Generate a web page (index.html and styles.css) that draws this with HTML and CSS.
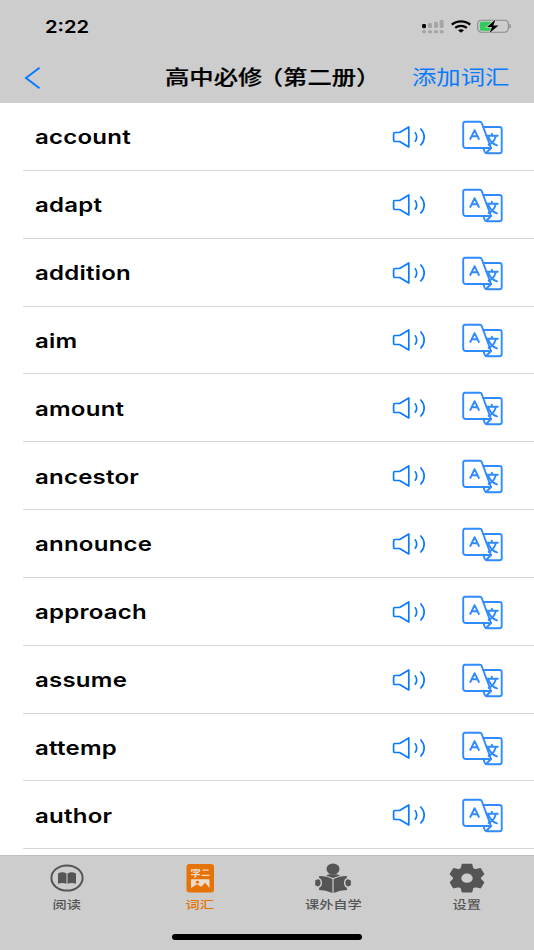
FILE: index.html
```html
<!DOCTYPE html>
<html lang="zh">
<head>
    <meta charset="utf-8" />
    <title>高中必修（第二册）</title>
    <link rel="stylesheet" href="styles.css">
</head>
<body class="body">
    <!-- icons used in every row -->
    <svg class="sprite">
        <symbol id="sound" viewBox="0 0 36 26">
            <path d="M3.8 8.5H8.6L17.8 3V23L8.6 17.5H3.8Q2.6 17.5 2.6 16.3V9.7Q2.6 8.5 3.8 8.5Z" />
            <path d="M24.2 8.8C26.2 11 26.2 15 24.2 17.2M29.8 5C34.3 9.6 34.3 16.4 29.8 21" />
        </symbol>
        <symbol id="translate" viewBox="0 0 44 36">
            <path d="M5.2 2.7H20Q21.2 2.7 21.7 4L31 29H6Q3.2 29 3.2 26.5V4.7Q3.2 2.7 5.2 2.7Z" />
            <path d="M23.5 8H39.5Q41.7 8 41.7 10.2V32.2Q41.7 34.3 39.5 34.3H27Q25.3 34.3 24.8 33L23.5 29.2M31 29L26.2 34" />
            <path d="M10.3 20L14.6 11.2L18.9 20M12.2 17.3H17" />
            <path d="M26.5 16.8H37.8M31.8 14.8V16.8M35.8 17C34.8 21 32 24.6 28.6 26M28.6 18.5C30.2 22 33.5 25.3 37 26.4" />
        </symbol>
    </svg>

    <div class="header">
        <div class="statusBar">
            <span class="time">2:22</span>
            <div class="statusIcons">
                <svg class="signal" width="22" height="15" viewBox="0 0 22 15">
                    <g fill="#a5a5a5">
                        <rect x="6" y="4" width="4" height="5" rx="1.2" />
                        <rect x="12" y="2.7" width="4" height="6.3" rx="1.2" />
                        <rect x="17.6" y="1" width="4" height="8" rx="1.2" />
                        <rect x="0" y="11.3" width="4" height="3" rx="1.2" />
                        <rect x="6" y="11.3" width="4" height="3" rx="1.2" />
                        <rect x="12" y="11.3" width="4" height="3" rx="1.2" />
                        <rect x="17.6" y="11.3" width="4" height="3" rx="1.2" />
                    </g>
                    <rect x="0" y="5" width="4" height="4.2" rx="1.4" />
                </svg>
                <svg class="wifi" width="20" height="13" viewBox="0 0 20 13">
                    <g fill="none" stroke="#000" stroke-width="2.3">
                        <path d="M.8 4.6C5.8 .3 14.2 .3 19.2 4.6" />
                        <path d="M4.2 7.8C7.5 5.1 12.5 5.1 15.8 7.8" />
                    </g>
                    <path d="M7 10.2Q10 8.2 13 10.2L10 12.8Z" />
                </svg>
                <svg class="battery" width="35" height="15" viewBox="0 0 35 15">
                    <rect x=".7" y="1.2" width="30.6" height="12" rx="3.6" fill="none" stroke="#8a8a8a" stroke-width="1.1" />
                    <path d="M32.8 5.2Q34.6 7.2 32.8 9.2Z" fill="#8a8a8a" stroke="#8a8a8a" stroke-width=".7" />
                    <rect x="2.8" y="2.8" width="12" height="9" rx="1.8" fill="#30cb5a" />
                    <path d="M18.5 .5L10 8H15L12.5 14L21.5 6.4H16.3Z" stroke="#cdcdcd" stroke-width="1.6" paint-order="stroke" />
                </svg>
            </div>
        </div>
        <div class="navBar">
            <svg class="back" width="18" height="24" viewBox="0 0 18 24">
                <path d="M15.5 1.8L2 12L15.5 22.2" />
            </svg>
            <span class="title">高中必<span class="tight">修</span>（第二册）</span>
            <span class="add">添加词汇</span>
        </div>
    </div>

    <ul class="list">
        <li class="row"><span class="word">account</span><svg class="sound"><use href="#sound" /></svg><svg class="translate"><use href="#translate" /></svg></li>
        <li class="row"><span class="word">adapt</span><svg class="sound"><use href="#sound" /></svg><svg class="translate"><use href="#translate" /></svg></li>
        <li class="row"><span class="word">addition</span><svg class="sound"><use href="#sound" /></svg><svg class="translate"><use href="#translate" /></svg></li>
        <li class="row"><span class="word">aim</span><svg class="sound"><use href="#sound" /></svg><svg class="translate"><use href="#translate" /></svg></li>
        <li class="row"><span class="word">amount</span><svg class="sound"><use href="#sound" /></svg><svg class="translate"><use href="#translate" /></svg></li>
        <li class="row"><span class="word">ancestor</span><svg class="sound"><use href="#sound" /></svg><svg class="translate"><use href="#translate" /></svg></li>
        <li class="row"><span class="word">announce</span><svg class="sound"><use href="#sound" /></svg><svg class="translate"><use href="#translate" /></svg></li>
        <li class="row"><span class="word">approach</span><svg class="sound"><use href="#sound" /></svg><svg class="translate"><use href="#translate" /></svg></li>
        <li class="row"><span class="word">assume</span><svg class="sound"><use href="#sound" /></svg><svg class="translate"><use href="#translate" /></svg></li>
        <li class="row"><span class="word">attemp</span><svg class="sound"><use href="#sound" /></svg><svg class="translate"><use href="#translate" /></svg></li>
        <li class="row"><span class="word">author</span><svg class="sound"><use href="#sound" /></svg><svg class="translate"><use href="#translate" /></svg></li>
    </ul>

    <div class="tabBar">
        <div class="tabs">
            <div class="tab">
                <svg width="36" height="32" viewBox="0 0 36 32">
                    <ellipse cx="18" cy="16" rx="15.6" ry="12.6" fill="none" stroke="#555" stroke-width="2" />
                    <path d="M9 11.5Q13.3 9 17.5 11.5V21.8Q13.3 20 9 21.8ZM18.5 11.5Q22.7 9 27 11.5V21.8Q22.7 20 18.5 21.8Z" fill="#555" />
                </svg>
                <span class="label">阅读</span>
            </div>
            <div class="tab active">
                <svg width="36" height="32" viewBox="0 0 36 32">
                    <rect x="4.5" y="2" width="27.5" height="28.5" rx="3" fill="#e67307" />
                    <g fill="none" stroke="#ecdccb" stroke-width="1.3">
                        <path d="M9.5 9.7V8H17.5V9.7M13.5 6.7V8M10.8 10.2H16L13.6 11.8V14.8H12M9 12.6H18" />
                        <path d="M20.5 8.2H26.5M19.5 13.4H27.5" />
                    </g>
                    <path d="M10 17.3H26.5Q27.5 17.3 27.5 18.3V26L23.2 20.8L19.2 24.8L15 22.3L9 26V18.3Q9 17.3 10 17.3Z" fill="#ecdccb" />
                    <ellipse cx="15.4" cy="20.2" rx="1.7" ry="1.4" fill="#e67307" />
                </svg>
                <span class="label">词汇</span>
            </div>
            <div class="tab">
                <svg width="38" height="32" viewBox="0 0 38 32">
                    <g fill="#555">
                        <ellipse cx="19" cy="7" rx="6.5" ry="5.6" />
                        <path d="M4.8 14.2Q12 13.6 18.4 17V31Q12 28 4.8 28L5.4 25.6Q8 24.6 8 20.8Q8 17 5.4 16.2ZM33.2 14.2Q26 13.6 19.6 17V31Q26 28 33.2 28L32.6 25.6Q30 24.6 30 20.8Q30 17 32.6 16.2Z" />
                        <path d="M12 13.4Q14.5 12.2 16 12.2H22Q23.5 12.2 26 13.4L19 16Z" />
                        <path d="M3.8 17.2Q6.6 17.4 6.6 20.8Q6.6 24.2 3.8 24.4L1.2 23.2V18.4ZM34.2 17.2Q31.4 17.4 31.4 20.8Q31.4 24.2 34.2 24.4L36.8 23.2V18.4Z" />
                    </g>
                </svg>
                <span class="label">课外自学</span>
            </div>
            <div class="tab">
                <svg class="gear" width="36" height="32" viewBox="0 0 36 32">
                    <path fill="#555" stroke="#555" stroke-width="2" stroke-linejoin="round" fill-rule="evenodd" d="M13.6 2.8H22.4L23.4 6.8L26.4 8.1L31.2 7L34.2 12L31 15.2V17.2L34.2 20.4L31.2 25.4L26.4 24.2L23.4 25.6L22.4 29.6H13.6L12.6 25.6L9.6 24.2L4.8 25.4L1.8 20.4L5 17.2V15.2L1.8 12L4.8 7L9.6 8.1L12.6 6.8ZM18 10.6A6.7 5.6 0 1 0 18 21.8A6.7 5.6 0 1 0 18 10.6Z" />
                </svg>
                <span class="label">设置</span>
            </div>
        </div>
        <div class="homeLine"></div>
    </div>
</body>
</html>
```

FILE: styles.css
```css
.body{
    margin: 0;
    height: 950px;
    display: flex;
    flex-direction: column;
    overflow: hidden;
    background-color: white;
    font-family: Inter, "Noto Sans CJK SC", sans-serif;
}
.sprite{
    display: none;
}
.header{
    height: 103px;
    flex: none;
    background-color: #cdcdcd;
}
.statusBar{
    height: 52px;
    display: flex;
    align-items: center;
    justify-content: space-between;
    padding: 0 22px 0 45px;
    box-sizing: border-box;
}
.time{
    font-size: 17.5px;
    font-weight: 600;
    transform: scaleX(1.15);
    transform-origin: left;
}
.statusIcons{
    display: flex;
    align-items: center;
}
.wifi{
    margin-left: 7px;
}
.battery{
    margin-left: 6px;
}
.navBar{
    height: 51px;
    display: grid;
    grid-template-columns: 141px 1fr 122px;
    align-items: center;
}
.back{
    margin-left: 24px;
    fill: none;
    stroke: #0a7aff;
    stroke-width: 2;
}
.title{
    font-size: 20px;
    line-height: 30px;
    font-weight: 500;
    -webkit-text-stroke: 0.2px black;
    white-space: nowrap;
    margin-left: 24px;
    transform: scaleX(1.217);
    transform-origin: left;
}
.tight{
    letter-spacing: -3px;
}
.add{
    font-size: 20px;
    line-height: 30px;
    white-space: nowrap;
    color: #0a7aff;
    transform: scaleX(1.217);
    transform-origin: left;
}
.list{
    flex: 1;
    min-height: 0;
    margin: 0;
    padding: 0 0 0 23px;
    list-style: none;
    overflow: hidden;
}
.row{
    height: 67.85px;
    box-sizing: border-box;
    display: flex;
    align-items: center;
    padding: 1px 30px 0 12px;
    border-bottom: 1px solid #d9d9d9;
}
.word{
    margin-top: 1px;
    font-size: 20px;
    font-weight: 600;
    letter-spacing: 0.2px;
    transform: scaleX(1.2);
    transform-origin: left;
}
.sound{
    width: 36px;
    height: 26px;
    margin-left: auto;
    margin-right: 33px;
}
.translate{
    width: 44px;
    height: 36px;
}
.sound, .translate{
    fill: none;
    stroke: #0a7aff;
    stroke-width: 1.7;
    stroke-linejoin: round;
    stroke-linecap: round;
}
.translate{
    stroke: #2f8bff;
    stroke-width: 1.9;
}
.tabBar{
    height: 95px;
    flex: none;
    box-sizing: border-box;
    background-color: #cdcdcd;
    border-top: 1px solid #bfbfbf;
}
.tabs{
    height: 78px;
    display: grid;
    grid-template-columns: repeat(4, 133.3px);
}
.tab{
    display: flex;
    flex-direction: column;
    align-items: center;
    padding-top: 6px;
    color: #555;
}
.active{
    color: #e67307;
}
.label{
    font-size: 11.7px;
    line-height: 18px;
    margin-top: 2px;
    font-weight: 500;
    transform: scaleX(1.217);
}
.homeLine{
    width: 190px;
    height: 6px;
    margin: 0 auto;
    border-radius: 3px;
    background-color: black;
}
```
